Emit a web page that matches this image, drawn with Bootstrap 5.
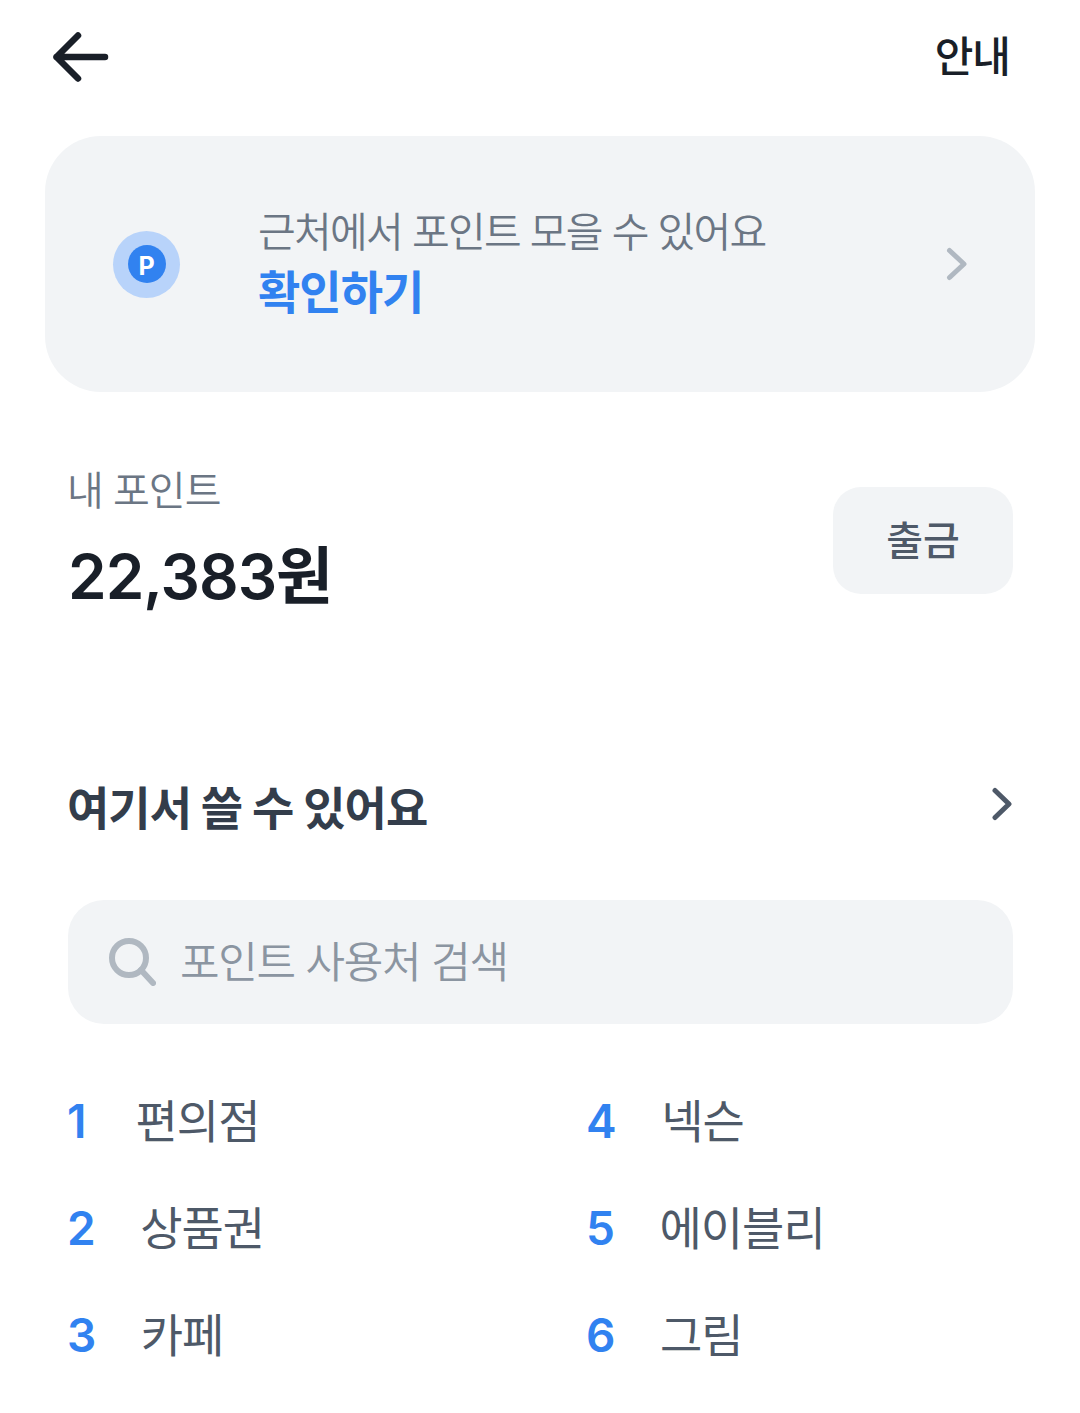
<!DOCTYPE html>
<html lang="ko">
<head>
    <meta charset="UTF-8">
    <meta name="viewport" content="width=device-width, initial-scale=1.0">
    <title>포인트</title>
    <link href="https://cdn.jsdelivr.net/npm/bootstrap@5.3.0/dist/css/bootstrap.min.css" rel="stylesheet">
    <style>
        body {
            background-color: #fff;
            font-family: Inter, "Noto Sans CJK KR", sans-serif;
            color: #191f28;
            letter-spacing: -1px;
        }
        .top-bar {
            height: 136px;
            padding: 32px 70px 54px 53px;
        }
        .top-link {
            font-size: 42px;
            line-height: 46px;
            margin-top: 2px;
            font-weight: 500;
        }
        .nearby-box {
            margin: 0 45px;
            height: 256px;
            padding: 0 67px 0 68px;
            background-color: #f2f4f6;
            border-radius: 56px;
        }
        .p-ring {
            width: 67px;
            height: 67px;
            background-color: #b8d3fa;
            margin-right: 79px;
        }
        .p-dot {
            width: 38px;
            height: 38px;
            padding-top: 4px;
            background-color: #3182f0;
            color: #fff;
            font-size: 25px;
            font-weight: 700;
            line-height: 1;
            letter-spacing: 0;
        }
        .nearby-text {
            font-size: 41px;
            line-height: 58px;
            margin-top: -2px;
            margin-left: -1px;
            color: #6b7684;
            font-weight: 350;
            letter-spacing: -1.7px;
        }
        .nearby-link {
            font-size: 46px;
            line-height: 62px;
            margin-left: -1px;
            color: #3182f0;
            font-weight: 700;
        }
        .point-row {
            margin: 71px 67px 0 68px;
            height: 168px;
        }
        .point-label {
            font-size: 40px;
            line-height: 56px;
            margin-left: -1px;
            color: #6b7684;
            font-weight: 350;
        }
        .point-value {
            font-size: 62px;
            line-height: 84px;
            margin-top: 16px;
            font-weight: 600;
            color: #191f28;
        }
        .btn-withdraw {
            width: 180px;
            height: 107px;
            margin-top: 24px;
            background-color: #f2f4f6;
            border: 0;
            border-radius: 28px;
            font-size: 40px;
            color: #4e5968;
            font-weight: 500;
        }
        .section-row {
            margin: 146px 67px 0 67px;
            height: 60px;
        }
        .section-title {
            font-size: 46px;
            line-height: 60px;
            margin: 2px 0 0;
            font-weight: 700;
            color: #333d4b;
        }
        .section-row svg {
            margin-top: -6px;
        }
        .search-box {
            margin: 63px 67px 0 68px;
            height: 124px;
            padding-left: 40px;
            background-color: #f2f4f6;
            border-radius: 36px;
            font-size: 43px;
            letter-spacing: -1.3px;
            color: #8b95a1;
            font-weight: 350;
        }
        .cat-grid {
            margin: 66px 67px 0 67px;
            grid-template-columns: 519px 1fr;
            row-gap: 45px;
        }
        .cat-item {
            height: 62px;
            font-size: 46px;
            line-height: 62px;
            color: #4e5968;
            font-weight: 400;
        }
        .cat-num {
            display: inline-block;
            min-width: 23px;
            color: #3182f0;
            font-weight: 600;
            margin-right: 45.500px;
        }
    </style>
</head>
<body>
    <div class="top-bar d-flex justify-content-between align-items-start">
        <svg width="56" height="50" viewBox="0 0 56 50" fill="none" stroke="#191f28" stroke-width="6.5" stroke-linecap="round" stroke-linejoin="round"><path d="M3.500 25H52M25 3.500L3.500 25L25 46.500"/></svg>
        <div class="top-link">안내</div>
    </div>

    <div class="nearby-box d-flex align-items-center">
        <div class="p-ring rounded-circle d-flex align-items-center justify-content-center flex-shrink-0">
            <div class="p-dot rounded-circle d-flex align-items-center justify-content-center">P</div>
        </div>
        <div class="flex-grow-1">
            <div class="nearby-text">근처에서 포인트 모을 수 있어요</div>
            <div class="nearby-link">확인하기</div>
        </div>
        <svg width="22" height="34" viewBox="0 0 22 34" fill="none" stroke="#b0b8c1" stroke-width="5" stroke-linecap="round" stroke-linejoin="round"><path d="M3.500 3.500L18 17L3.500 30.500"/></svg>
    </div>

    <div class="point-row d-flex justify-content-between align-items-start">
        <div>
            <div class="point-label">내 포인트</div>
            <div class="point-value">22,383원</div>
        </div>
        <button type="button" class="btn btn-withdraw">출금</button>
    </div>

    <div class="section-row d-flex justify-content-between align-items-center">
        <h2 class="section-title">여기서 쓸 수 있어요</h2>
        <svg width="22" height="34" viewBox="0 0 22 34" fill="none" stroke="#4e5968" stroke-width="5" stroke-linecap="round" stroke-linejoin="round"><path d="M4 3.500L18 17L4 30.500"/></svg>
    </div>

    <div class="search-box d-flex align-items-center gap-4">
        <svg width="48" height="48" viewBox="0 0 48 48" fill="none" stroke="#b0b8c1" stroke-width="6" stroke-linecap="round"><circle cx="21" cy="20" r="17"/><path d="M33 32L45 45"/></svg>
        <span>포인트 사용처 검색</span>
    </div>

    <div class="cat-grid d-grid">
        <div class="cat-item"><span class="cat-num">1</span>편의점</div>
        <div class="cat-item"><span class="cat-num">4</span>넥슨</div>
        <div class="cat-item"><span class="cat-num">2</span>상품권</div>
        <div class="cat-item"><span class="cat-num">5</span>에이블리</div>
        <div class="cat-item"><span class="cat-num">3</span>카페</div>
        <div class="cat-item"><span class="cat-num">6</span>그림</div>
    </div>

    <script src="https://cdn.jsdelivr.net/npm/bootstrap@5.3.0/dist/js/bootstrap.bundle.min.js"></script>
</body>
</html>
